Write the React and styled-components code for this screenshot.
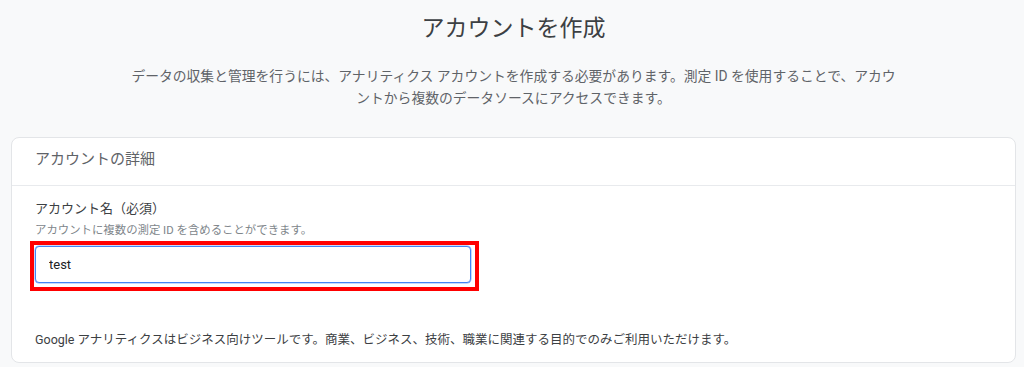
import React from "react";
import styled, { createGlobalStyle } from "styled-components";

const GlobalStyle = createGlobalStyle`
  body {
    margin: 0;
    background: #f8f9fa;
    font-family: Roboto, "Noto Sans CJK JP", sans-serif;
  }
`;

const App = () => {
  return (
    <>
      <GlobalStyle />
      <Page>
        <Title>アカウントを作成</Title>
        <Intro>
          データの収集と管理を行うには、アナリティクス アカウントを作成する必要があります。測定 ID を使用することで、アカウ
          <br />
          ントから複数のデータソースにアクセスできます。
        </Intro>
        <Card>
          <CardHeader>アカウントの詳細</CardHeader>
          <CardBody>
            <Label>アカウント名（必須）</Label>
            <Hint>アカウントに複数の測定 ID を含めることができます。</Hint>
            <Highlight>
              <Input defaultValue="test" />
            </Highlight>
            <Note>
              Google アナリティクスはビジネス向けツールです。商業、ビジネス、技術、職業に関連する目的でのみご利用いただけます。
            </Note>
          </CardBody>
        </Card>
      </Page>
    </>
  );
};

export default App;

const Page = styled.main`
  display: flex;
  flex-direction: column;
  padding: 0 8px 0 11px;
`;

const Title = styled.h1`
  margin: 14px 0 0;
  text-align: center;
  font-size: 23px;
  line-height: 30px;
  font-weight: 400;
  color: #3c4043;
`;

const Intro = styled.p`
  margin: 21px 0 0;
  text-align: center;
  font-size: 13.8px;
  line-height: 22px;
  color: #5f6368;
`;

const Card = styled.section`
  margin-top: 28px;
  background: #fff;
  border: 1px solid #e3e5e8;
  border-radius: 8px;
`;

const CardHeader = styled.h2`
  margin: 0;
  padding: 10px 23px 15px;
  font-size: 15px;
  line-height: 22px;
  font-weight: 400;
  color: #5f6368;
  border-bottom: 1px solid #e8eaed;
`;

const CardBody = styled.div`
  display: flex;
  flex-direction: column;
  align-items: flex-start;
  padding: 13px 23px 12px;
`;

const Label = styled.div`
  font-size: 13px;
  line-height: 20px;
  color: #3c4043;
`;

const Hint = styled.div`
  margin-top: 3px;
  font-size: 11.4px;
  line-height: 16px;
  color: #80868b;
`;

const Highlight = styled.div`
  margin: 3px 0 0 -5px;
  padding: 1px 4px 4px 1px;
  border: 4px solid #ff0000;
`;

const Input = styled.input`
  display: block;
  box-sizing: border-box;
  width: 436px;
  height: 37px;
  padding: 0 13px;
  border: 1px solid #4285f4;
  border-radius: 4px;
  box-shadow: 0 0 0 0.5px #8ab4f8;
  font-family: Roboto, "Noto Sans CJK JP", sans-serif;
  font-size: 13px;
  color: #202124;
  outline: none;
`;

const Note = styled.p`
  margin: 39px 0 0;
  font-size: 12.5px;
  line-height: 20px;
  color: #3c4043;
`;
